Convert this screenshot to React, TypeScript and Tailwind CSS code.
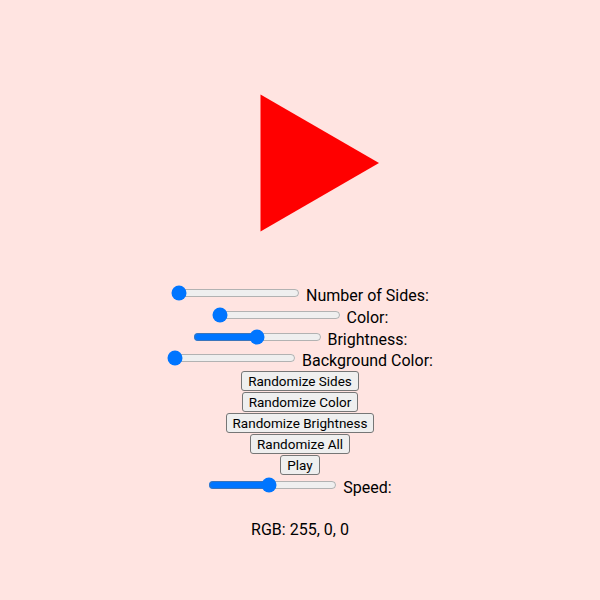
import React, { useState } from 'react';

const btn =
    'h-[20px] border border-[#767676] rounded-[3px] bg-[#efefef] px-[6px] text-[13.5px] leading-[normal] text-black';

export default function App() {
    const [sides, setSides] = useState(3);
    const [color, setColor] = useState(0);
    const [brightness, setBrightness] = useState(50);
    const [bg, setBg] = useState(0);
    const [speed, setSpeed] = useState(47);

    const buttons = ['Randomize Sides', 'Randomize Color', 'Randomize Brightness', 'Randomize All', 'Play'];

    return (
        <div className="min-h-screen w-full bg-[#ffe4e1] font-['Roboto',sans-serif] text-base text-black text-center">
            <div className="pt-[63px] flex justify-center">
                <svg width="200" height="200" viewBox="0 0 200 200">
                    <polygon points="179,100 60.5,31.6 60.5,168.4" fill="#ff0000" />
                </svg>
            </div>

            <div className="mt-[21px]">
                <div className="h-[21.8px]">
                    <input type="range" min={3} max={12} value={sides} onChange={e => setSides(+e.target.value)} />{' '}
                    <span className="pl-[2px]">Number of Sides:</span>
                </div>
                <div className="h-[21.8px]">
                    <input type="range" min={0} max={360} value={color} onChange={e => setColor(+e.target.value)} />{' '}
                    <span className="pl-[2px]">Color:</span>
                </div>
                <div className="h-[21.8px]">
                    <input type="range" min={0} max={100} value={brightness} onChange={e => setBrightness(+e.target.value)} />{' '}
                    <span className="pl-[2px]">Brightness:</span>
                </div>
                <div className="h-[21.8px]">
                    <input type="range" min={0} max={360} value={bg} onChange={e => setBg(+e.target.value)} />{' '}
                    <span className="pl-[2px]">Background Color:</span>
                </div>
                {buttons.map(label => (
                    <div key={label} className="h-[21px] flex justify-center items-start">
                        <button className={btn}>{label}</button>
                    </div>
                ))}
                <div className="h-[22px]">
                    <input type="range" min={0} max={100} value={speed} onChange={e => setSpeed(+e.target.value)} />{' '}
                    <span className="pl-[2px]">Speed:</span>
                </div>
                <p className="mt-[20px]">RGB: 255, 0, 0</p>
            </div>
        </div>
    );
}
